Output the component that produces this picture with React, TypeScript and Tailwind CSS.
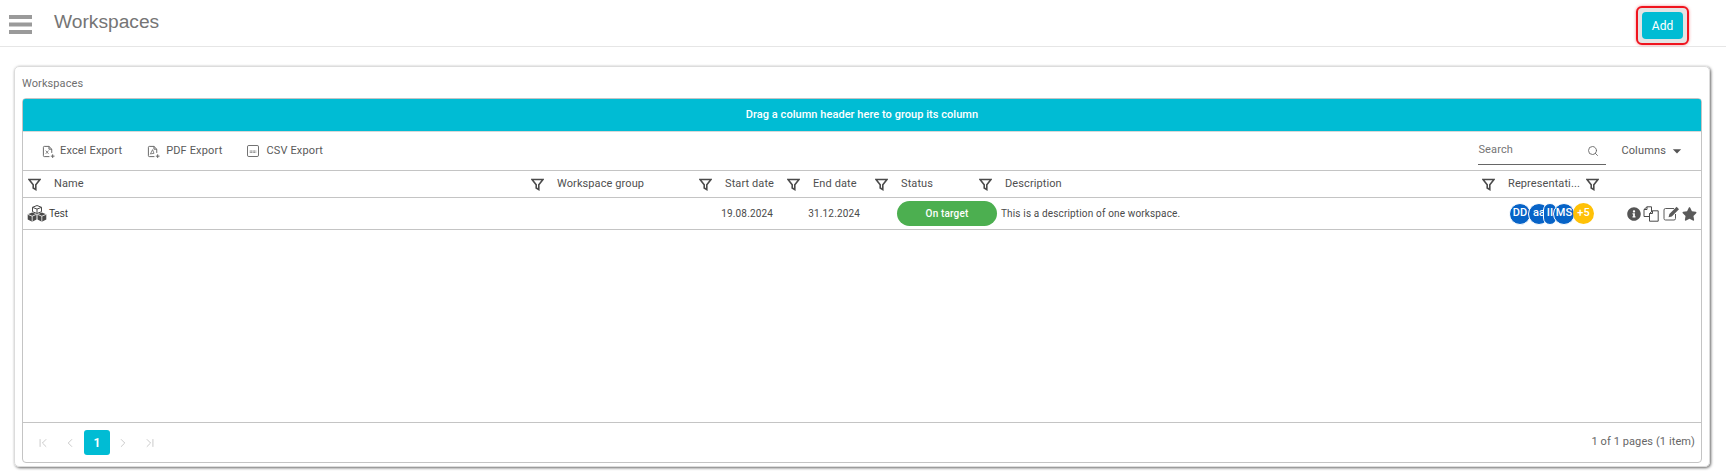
import { FaInfoCircle, FaStar } from 'react-icons/fa';
import { MdArrowDropDown } from 'react-icons/md';
import { ChevronLeft, ChevronRight, ChevronFirst, ChevronLast, Search } from 'lucide-react';

const columns = [
  { label: 'Name', width: 'w-[503px]' },
  { label: 'Workspace group', width: 'w-[168px]' },
  { label: 'Start date', width: 'w-[88px]' },
  { label: 'End date', width: 'w-[88px]' },
  { label: 'Status', width: 'w-[104px]' },
  { label: 'Description', width: 'w-[503px]' },
  { label: 'Representati...', width: 'w-[104px]' },
];

function FilterIcon() {
  return (
    <svg viewBox="0 0 13 13" className="w-[13px] h-[13px] shrink-0 text-[#4a4a4a]" fill="none" stroke="currentColor" strokeWidth="1.6">
      <path d="M1 1.5h11L7.8 6.8v4.7L5.2 10V6.8z" />
    </svg>
  );
}

function DocIcon({ children }: { children: React.ReactNode }) {
  return (
    <svg viewBox="0 0 14 14" className="w-[13px] h-[13px] text-[#5f5f5f]" fill="none" stroke="currentColor" strokeWidth="1">
      <path d="M8 12.5H2.5a1 1 0 0 1-1-1v-9a1 1 0 0 1 1-1h5l3 3v4" />
      <path d="M7.5 1.5v3h3" />
      <path d="M11.5 10v4M9.5 12h4" stroke="#5f5f5f" />
      {children}
    </svg>
  );
}

function CubesIcon() {
  return (
    <svg viewBox="0 0 20 18" className="w-[20px] h-[18px] shrink-0 text-[#4a4a4a]" fill="currentColor">
      <path d="M10 0.5l4.5 1.8v4.4L10 8.5 5.5 6.7V2.3z" fill="#fff" stroke="currentColor" strokeWidth="1" />
      <path d="M5.5 2.3L10 4.1l4.5-1.8M10 4.1v4.4" fill="none" stroke="currentColor" strokeWidth="1" />
      <path d="M5.2 7.5l4.3 1.8v5.2l-4.3 2.3L0.7 14.5V9.3z" />
      <path d="M14.8 7.5l4.5 1.8v5.2l-4.5 2.3-4.3-2.3V9.3z" />
      <path d="M0.7 9.3l4.5 1.9 4.3-1.9M5.2 11.2v5.6M10.5 9.3l4.3 1.9 4.5-1.9M14.8 11.2v5.6" fill="none" stroke="#fff" strokeWidth="0.8" />
    </svg>
  );
}

function CopyIcon() {
  return (
    <svg viewBox="0 0 16 16" className="w-[16px] h-[16px] shrink-0 text-[#4a4a4a]" fill="#fff" stroke="currentColor" strokeWidth="1">
      <path d="M1 3.5L4 0.8h4.5v9.7H1z" />
      <path d="M1 3.5h3V0.8" fill="none" />
      <path d="M6.5 7.5L9.5 4.8h5.7v10.4H6.5z" />
      <path d="M6.5 7.5h3V4.8" fill="none" />
    </svg>
  );
}

function EditIcon() {
  return (
    <svg viewBox="0 0 17 15" className="w-[17px] h-[15px] shrink-0 text-[#5a5a5a]">
      <path d="M11 2.5H2.5a1.5 1.5 0 0 0-1.5 1.5v8.5a1.5 1.5 0 0 0 1.5 1.5H11a1.5 1.5 0 0 0 1.5-1.5V8" fill="none" stroke="currentColor" strokeWidth="1" />
      <path d="M13.6 0.8l2.4 2.4-7.2 7.2-3.2 0.8 0.8-3.2z" fill="currentColor" />
    </svg>
  );
}

function Avatar({ text, className }: { text: string; className: string }) {
  return (
    <span className={`h-[22px] shrink-0 rounded-full bg-[#0763c7] text-white text-[11px] font-medium flex items-center justify-center overflow-hidden border border-white ${className}`}>
      {text}
    </span>
  );
}

export default function App() {
  return (
    <div className="h-[475px] w-[1726px] overflow-hidden bg-white font-['Roboto',sans-serif] text-[#5a5a5a]">
      {/* Top bar */}
      <div className="h-[47px] border-b border-[#e6e6e6] flex items-center pl-[9px] pr-[37px]">
        <svg viewBox="0 0 23 19" className="w-[23px] h-[19px] mt-[2px] text-[#9a9a9a]" fill="currentColor">
          <rect x="0" y="0" width="23" height="4" />
          <rect x="0" y="7.5" width="23" height="4" />
          <rect x="0" y="15" width="23" height="4" />
        </svg>
        <h1 className="ml-[22px] mb-[2px] font-['Liberation_Sans',sans-serif] text-[19.2px] text-[#757575]">Workspaces</h1>
        <div className="ml-auto mt-[5px] rounded-[6px] border-2 border-[#f0141e] bg-[#e4e4e4] p-[4px] shadow-[0_0_3px_rgba(240,20,30,0.5)]">
          <button className="block w-[41px] h-[27px] rounded-[4px] bg-[#00bcd4] text-white text-[12px]">Add</button>
        </div>
      </div>

      {/* Card */}
      <div className="pl-[14px] pt-[19px] pr-[16px]">
        <div className="h-[401px] rounded-[5px] border border-[#dcdcdc] shadow-[1px_1px_3px_rgba(0,0,0,0.6)] px-[7px] pb-[3px] flex flex-col">
          <div className="h-[31px] pt-[3px] flex items-center text-[11px] tracking-[0.1px] text-[#6f6f6f]">Workspaces</div>

          <div className="flex-1 min-h-0 rounded-[4px] border border-[#c4c4c4] flex flex-col">
            <div className="h-[33px] rounded-t-[2px] border-b border-[#d8d8d8] bg-[#00bcd4] text-white text-[11px] tracking-[0.05px] font-medium flex items-center justify-center">
              Drag a column header here to group its column
            </div>

            {/* Toolbar */}
            <div className="h-[39px] border-b border-[#c4c4c4] flex items-center text-[11px] tracking-[0.15px] text-[#5a5a5a]">
              <div className="ml-[19px] flex items-center gap-[5px]">
                <DocIcon>
                  <path d="M4 6l3 3.5M7 6L4 9.5" strokeWidth="0.8" />
                </DocIcon>
                Excel Export
              </div>
              <div className="ml-[25px] flex items-center gap-[6px]">
                <DocIcon>
                  <path d="M3.5 10L6 5l1.5 4-3.5.5" strokeWidth="0.8" />
                </DocIcon>
                PDF Export
              </div>
              <div className="ml-[25px] flex items-center gap-[7px]">
                <svg viewBox="0 0 13 13" className="w-[12px] h-[12px] text-[#5f5f5f]" fill="none" stroke="currentColor">
                  <rect x="0.5" y="0.5" width="12" height="12" rx="1.5" />
                  <path d="M3 6.5h7M3 8h7" strokeWidth="1" strokeDasharray="1 0.6" />
                </svg>
                CSV Export
              </div>
              <div className="ml-auto w-[128px] h-[28px] border-b border-[#666] flex items-center justify-between pr-[7px] text-[#757575]">
                Search
                <Search className="w-[12px] h-[12px] text-[#666]" strokeWidth={1.8} />
              </div>
              <div className="ml-[15px] mr-[14px] flex items-center gap-[1px]">
                Columns
                <MdArrowDropDown className="w-[20px] h-[20px] text-[#555]" />
              </div>
            </div>

            {/* Header row */}
            <div className="h-[27px] pt-[1px] border-b border-[#c4c4c4] flex text-[11px] tracking-[0.1px] text-[#4f4f4f]">
              {columns.map((col) => (
                <div key={col.label} className={`${col.width} pl-[5px] flex items-center gap-[13px]`}>
                  <FilterIcon />
                  <span>{col.label}</span>
                </div>
              ))}
              <div className="flex-1 pl-[5px] flex items-center">
                <FilterIcon />
              </div>
            </div>

            {/* Data row */}
            <div className="h-[32px] border-b border-[#c4c4c4] flex items-center text-[10px] tracking-[0.15px] text-[#4a4a4a]">
              <div className="w-[503px] pl-[4px] flex items-center gap-[2px] font-['Liberation_Sans',sans-serif] text-[#333]">
                <CubesIcon />
                Test
              </div>
              <div className="w-[168px]" />
              <div className="w-[88px] pr-[9px] text-right">19.08.2024</div>
              <div className="w-[88px] pr-[10px] text-right">31.12.2024</div>
              <div className="w-[104px] pl-[27px]">
                <div className="w-[100px] h-[25px] rounded-full bg-[#4caf50] text-white font-medium flex items-center justify-center">On target</div>
              </div>
              <div className="w-[503px] pl-[27px]">This is a description of one workspace.</div>
              <div className="w-[104px] pl-[32px] flex items-center whitespace-nowrap">
                <Avatar text="DD" className="w-[22px]" />
                <Avatar text="aa" className="w-[22px] -ml-[3px]" />
                <Avatar text="II" className="w-[14px] -ml-[7px]" />
                <Avatar text="MS" className="w-[22px] -ml-[4px]" />
                <span className="w-[21px] h-[21px] shrink-0 -ml-[2px] rounded-full bg-[#ffc107] text-white text-[11px] font-medium flex items-center justify-center">+5</span>
              </div>
              <div className="flex-1 pl-[46px] flex items-center text-[#4a4a4a]">
                <FaInfoCircle className="w-[14px] h-[14px] shrink-0 text-[#555]" />
                <span className="ml-[2px]"><CopyIcon /></span>
                <span className="ml-[4px]"><EditIcon /></span>
                <FaStar className="ml-[2px] w-[15px] h-[14px] shrink-0 text-[#5a5a5a]" />
              </div>
            </div>

            <div className="flex-1" />

            {/* Pager */}
            <div className="h-[40px] border-t border-[#c4c4c4] flex items-center text-[#b5b5b5]">
              <div className="ml-[13px] w-[14px] flex justify-center"><ChevronFirst className="w-[14px] h-[14px]" strokeWidth={1.2} /></div>
              <div className="ml-[13px] w-[14px] flex justify-center"><ChevronLeft className="w-[14px] h-[14px]" strokeWidth={1.2} /></div>
              <div className="ml-[7px] w-[26px] h-[25px] rounded-[3px] bg-[#00bcd4] text-white text-[12px] font-bold flex items-center justify-center">1</div>
              <div className="ml-[6px] w-[14px] flex justify-center"><ChevronRight className="w-[14px] h-[14px]" strokeWidth={1.2} /></div>
              <div className="ml-[13px] w-[14px] flex justify-center"><ChevronLast className="w-[14px] h-[14px]" strokeWidth={1.2} /></div>
              <div className="ml-auto mr-[6px] text-[11px] tracking-[0.1px] text-[#666]">1 of 1 pages (1 item)</div>
            </div>
          </div>
        </div>
      </div>
    </div>
  );
}
